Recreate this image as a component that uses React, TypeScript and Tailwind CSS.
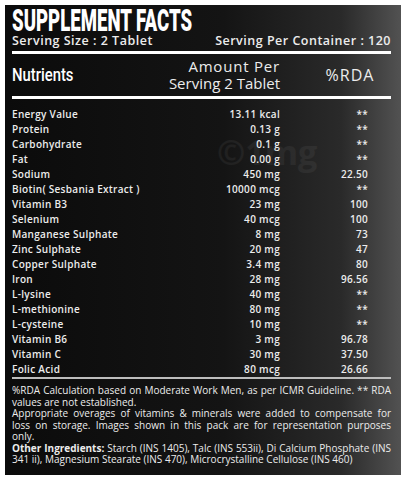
const rows: [string, string, string][] = [
  ['Energy Value', '13.11 kcal', '**'],
  ['Protein', '0.13 g', '**'],
  ['Carbohydrate', '0.1 g', '**'],
  ['Fat', '0.00 g', '**'],
  ['Sodium', '450 mg', '22.50'],
  ['Biotin( Sesbania Extract )', '10000 mcg', '**'],
  ['Vitamin B3', '23 mg', '100'],
  ['Selenium', '40 mcg', '100'],
  ['Manganese Sulphate', '8 mg', '73'],
  ['Zinc Sulphate', '20 mg', '47'],
  ['Copper Sulphate', '3.4 mg', '80'],
  ['Iron', '28 mg', '96.56'],
  ['L-lysine', '40 mg', '**'],
  ['L-methionine', '80 mg', '**'],
  ['L-cysteine', '10 mg', '**'],
  ['Vitamin B6', '3 mg', '96.78'],
  ['Vitamin C', '30 mg', '37.50'],
  ['Folic Acid', '80 mcg', '26.66'],
];

const body = "font-['Open_Sans','Liberation_Sans',sans-serif]";
const narrow = "font-['Roboto','Liberation_Sans',sans-serif]";

// justified footer lines (text-align-last keeps single lines spread)
const Line = ({ children, full }: { children: React.ReactNode; full?: boolean }) => (
  <div className={full ? 'whitespace-nowrap [text-align-last:justify]' : 'whitespace-nowrap'}>
    {children}
  </div>
);

export default function App() {
  return (
    <div className="w-[407px] h-[480px] bg-white pt-[5px] pl-[5px]">
      <div
        className={`relative w-[396px] h-[470px] flex flex-col pl-[7px] pr-[10px] text-[#ececec] bg-[linear-gradient(to_right,#0b0b0b_0%,#141414_55%,#2a2a2a_85%,#525252_100%)] ${body}`}
      >
        <div className="h-[29px]">
          <div
            className={`${narrow} inline-block origin-left scale-x-[0.6] whitespace-nowrap font-black text-white text-[31px] leading-[30px] mt-[1px]`}
          >
            SUPPLEMENT FACTS
          </div>
        </div>
        <div className="flex justify-between items-center text-[12.5px] leading-[14px] font-semibold h-[14px] tracking-[0.5px]">
          <span>Serving Size : 2 Tablet</span>
          <span>Serving Per Container : 120</span>
        </div>
        <div className="h-[3px] bg-white mt-[3px]" />
        <div className="flex items-center h-[42px]">
          <div className="w-[140px]">
            <div
              className={`${narrow} inline-block origin-left scale-x-[0.78] whitespace-nowrap font-medium text-[19px] text-white`}
            >
              Nutrients
            </div>
          </div>
          <div className="w-[128px] text-right text-[15px] leading-[17px] font-medium">
            <div className="tracking-[0.8px]">Amount Per</div>
            <div>Serving 2 Tablet</div>
          </div>
          <div className="flex-1 text-center text-[16px] font-medium pl-[29px] tracking-[1px]">%RDA</div>
        </div>
        <div className="h-[3px] bg-white" />
        <div className="mt-[8px] flex flex-col text-[10px] font-semibold tracking-[0.3px]">
          {rows.map(([name, amt, rda]) => (
            <div key={name} className="flex h-[15px] items-center">
              <div className="w-[200px]">{name}</div>
              <div className="w-[68px] text-right">{amt}</div>
              <div className="w-[88px] text-right">{rda}</div>
            </div>
          ))}
        </div>
        <div className="h-[2px] bg-[#bdbdbd]" />
        <div className="mt-[6px] text-[10px] leading-[11.5px] font-medium">
          <Line full>%RDA Calculation based on Moderate Work Men, as per ICMR Guideline. ** RDA</Line>
          <Line>values are not established.</Line>
          <Line full>Appropriate overages of vitamins &amp; minerals were added to compensate for</Line>
          <Line full>loss on storage. Images shown in this pack are for representation purposes</Line>
          <Line>only.</Line>
          <Line full>
            <span className="font-bold">Other Ingredients:</span> Starch (INS 1405), Talc (INS 553ii), Di
            Calcium Phosphate (INS
          </Line>
          <Line>341 ii), Magnesium Stearate (INS 470), Microcrystalline Cellulose (INS 460)</Line>
        </div>
        <div className="absolute left-[212px] top-[122px] text-[34px] font-bold text-white/5">
          ©1mg
        </div>
      </div>
    </div>
  );
}
